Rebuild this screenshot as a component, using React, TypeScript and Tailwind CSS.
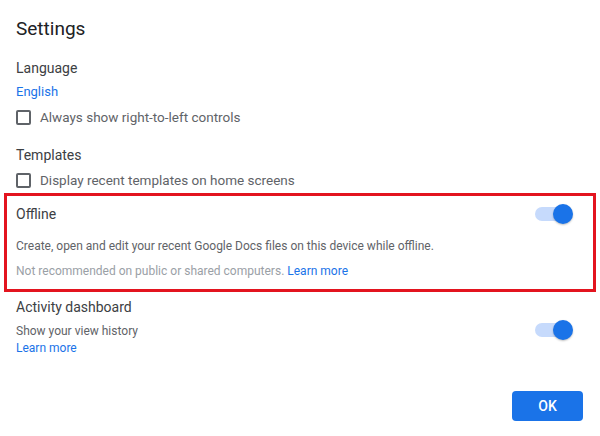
const font = { fontFamily: "Roboto, 'Noto Sans', Arial, sans-serif" };

const Checkbox = ({ label }: { label: string }) => (
  <label className="flex h-6 items-center gap-[9px]">
    <span className="h-[15px] w-[15px] rounded-[2px] border-2 border-[#5f6368] bg-white" />
    <span className="text-[13.5px] text-[#5f6368]">{label}</span>
  </label>
);

const Toggle = () => (
  <div className="relative h-5 w-[38px]">
    <div className="absolute left-0 top-[3px] h-[14px] w-[34px] rounded-full bg-[#c6dafc]" />
    <div className="absolute right-0 top-0 h-5 w-5 rounded-full bg-[#1a73e8] shadow-[0_1px_2px_rgba(0,0,0,0.25)]" />
  </div>
);

export default function App() {
  return (
    <div className="h-[436px] w-[600px] bg-white pt-[15px]" style={font}>
      <h1 className="px-4 text-[19px] leading-7 text-[#202124]">Settings</h1>

      <div className="mt-[15px] px-4">
        <div className="text-[14px] leading-5 text-[#3c4043]">Language</div>
        <div className="mt-[5px] text-[13px] leading-[18px] text-[#1a73e8]">English</div>
        <div className="mt-[4px]">
          <Checkbox label="Always show right-to-left controls" />
        </div>
      </div>

      <div className="mt-[16px] px-4">
        <div className="text-[14px] leading-5 text-[#3c4043]">Templates</div>
        <div className="mt-[3px]">
          <Checkbox label="Display recent templates on home screens" />
        </div>
      </div>

      <div className="mx-1 mt-[1px] h-[99px] border-[3px] border-[#e3141f] pl-[9px] pr-[20px] pt-[8px]">
        <div className="flex items-center justify-between">
          <span className="text-[14px] leading-5 text-[#3c4043]">Offline</span>
          <Toggle />
        </div>
        <p className="mt-[14px] text-[12px] leading-4 text-[#5f6368]">
          Create, open and edit your recent Google Docs files on this device while offline.
        </p>
        <p className="mt-[9px] text-[12px] leading-4 text-[#9aa0a6]">
          Not recommended on public or shared computers.{" "}
          <span className="text-[#1a73e8]">Learn more</span>
        </p>
      </div>

      <div className="mt-[5px] flex items-center justify-between pl-4 pr-[27px]">
        <div>
          <div className="text-[14px] leading-5 text-[#3c4043]">Activity dashboard</div>
          <div className="mt-[6px] text-[12px] leading-4 text-[#5f6368]">Show your view history</div>
          <div className="mt-[1px] text-[12px] leading-4 text-[#1a73e8]">Learn more</div>
        </div>
        <div className="mt-[6px]">
          <Toggle />
        </div>
      </div>

      <div className="mt-[35px] flex justify-end pr-[17px]">
        <button className="h-[30px] w-[71px] rounded-[4px] bg-[#1a73e8] text-[14px] font-medium text-white">
          OK
        </button>
      </div>
    </div>
  );
}
